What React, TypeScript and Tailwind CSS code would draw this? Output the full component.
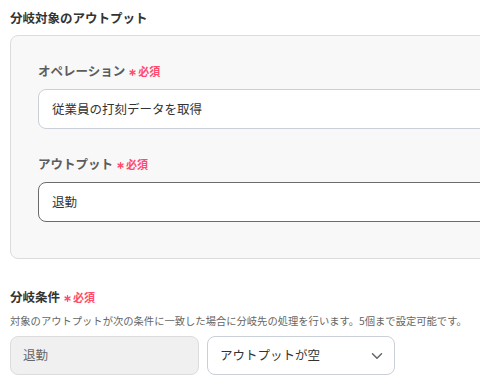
import { ChevronDown } from "lucide-react";

const font = { fontFamily: '"Noto Sans CJK JP", "Noto Sans", sans-serif' };

function Asterisk() {
  return (
    <svg viewBox="0 0 8 8" className="h-[7px] w-[7px]" stroke="currentColor" strokeWidth="1.6" strokeLinecap="round">
      <line x1="4" y1="0.8" x2="4" y2="7.2" />
      <line x1="1.2" y1="2.4" x2="6.8" y2="5.6" />
      <line x1="1.2" y1="5.6" x2="6.8" y2="2.4" />
    </svg>
  );
}

function Required() {
  return (
    <span className="ml-[4px] inline-flex items-center gap-[2px] text-[11px] font-bold text-[#ff4b6e] leading-none">
      <span className="translate-y-[1px]">
        <Asterisk />
      </span>
      <span>必須</span>
    </span>
  );
}

function Label({ children, dark }: { children: string; dark?: boolean }) {
  return (
    <div
      className={`flex items-center h-[20px] text-[12.5px] font-bold leading-[20px] ${
        dark ? "text-[#333]" : "text-[#5c5c5c]"
      }`}
    >
      {children}
      <Required />
    </div>
  );
}

export default function App() {
  return (
    <div
      className="w-[480px] h-[388px] overflow-hidden bg-white pl-[10px] pt-[8px]"
      style={font}
    >
      {/* Section title */}
      <div className="h-[20px] text-[12.5px] font-bold leading-[20px] text-[#333]">
        分岐対象のアウトプット
      </div>

      {/* Output panel */}
      <div className="mt-[7px] w-[540px] rounded-[8px] border border-[#dcdcdc] bg-[#f8f8f8] pl-[27px] pt-[25px] pb-[36px]">
        <Label>オペレーション</Label>
        <div className="mt-[8px] flex h-[40px] items-center rounded-[8px] border border-[#c9d0d8] bg-white pl-[13px] text-[12.5px] text-[#333]">
          従業員の打刻データを取得
        </div>

        <div className="mt-[25px]">
          <Label>アウトプット</Label>
        </div>
        <div className="mt-[8px] flex h-[40px] items-center rounded-[8px] border border-[#6b6b6b] bg-white pl-[13px] text-[12.5px] text-[#333]">
          退勤
        </div>
      </div>

      {/* Condition */}
      <div className="mt-[28px]">
        <Label dark>分岐条件</Label>
      </div>
      <div className="mt-[6px] h-[16px] text-[10.3px] leading-[16px] text-[#666] whitespace-nowrap">
        対象のアウトプットが次の条件に一致した場合に分岐先の処理を行います。5個まで設定可能です。
      </div>

      <div className="mt-[7px] flex gap-[8px]">
        <div className="flex h-[39px] w-[189px] items-center rounded-[8px] border border-[#dcdcdc] bg-[#f0f0f0] pl-[12px] text-[12.5px] text-[#666]">
          退勤
        </div>
        <div className="flex h-[39px] w-[188px] items-center justify-between rounded-[8px] border border-[#c9d0d8] bg-white pl-[12px] pr-[8px] text-[12.5px] text-[#333]">
          <span>アウトプットが空</span>
          <ChevronDown className="h-[18px] w-[18px] text-[#666]" strokeWidth={2} />
        </div>
      </div>
    </div>
  );
}
